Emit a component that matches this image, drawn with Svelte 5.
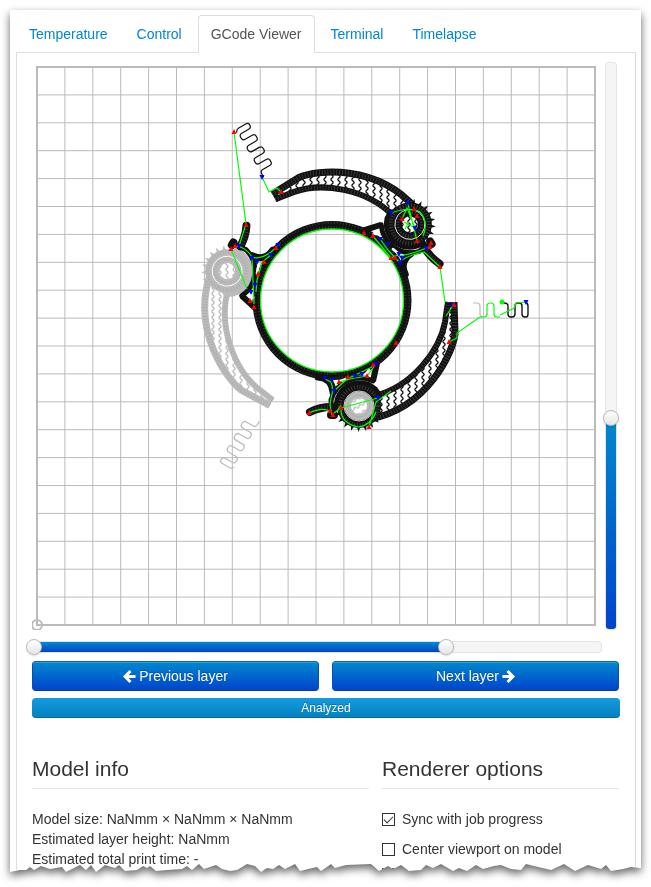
<script>
  const tabs = ['Temperature', 'Control', 'GCode Viewer', 'Terminal', 'Timelapse'];
  let active = $state('GCode Viewer');

  let layer = $state(372);
  let first = $state(0);
  let last = $state(725);

  let sync = $state(true);
  let center = $state(false);
  let zoomIn = $state(false);

  // torn bottom edge: horizontal position and depth above the lowest point
  const tear = [
    [0, 0], [10, 2], [16, 2], [20, 5], [24, 2], [31, 6], [40, 3], [52, 5], [56, 0], [70, 7], [76, 2], [81, 7],
    [86, 0], [95, 7], [105, 4], [109, 7], [115, 1], [127, 2], [133, 6], [137, 4], [140, 6], [146, 1], [157, 2],
    [172, 3], [177, 6], [182, 2], [189, 8], [194, 3], [206, 7], [212, 3], [220, 1], [227, 2], [237, 8],
    [245, 6], [251, 0], [257, 4], [263, 3], [269, 7], [275, 3], [285, 8], [290, 1], [298, 3], [307, 5],
    [311, 1], [321, 8], [325, 4], [336, 7], [361, 8], [369, 1], [378, 6], [383, 3], [391, 7], [399, 1],
    [411, 2], [416, 7], [423, 4], [431, 8], [443, 1], [449, 4], [457, 1], [466, 7], [473, 3], [484, 6],
    [491, 7], [501, 3], [511, 2], [516, 8], [524, 6], [541, 2], [554, 8], [565, 1], [578, 7], [591, 3],
    [596, 7], [601, 1], [613, 3], [621, 5], [631, 4]
  ];
  const clip =
    'polygon(0 0, ' +
    tear.map(([x, d]) => `${((x / 631) * 100).toFixed(2)}% calc(100% - ${d}px)`).join(', ') +
    ', 100% 0)';

  const cells = Array.from({ length: 19 }, (_, i) => 37 + (i + 1) * 27.9);

  const outerWall = 'M454,302 L455,334 C453,352 428,408 370,419';
  const innerWall = 'M448,302 L445,322 C440,350 412,387 374,396';
  const inside = 'M448,302 L445,322 C440,350 412,387 374,396 L370,419 C428,408 453,352 455,334 L454,302 Z';
  const purge =
    'M473,303 H477 Q480,303 480,306 V314 Q480,317 483,317 H484 Q487,317 487,314 V306 Q487,303 490,303 H491 Q494,303 494,306 V314 Q494,317 497,317 H498 Q501,317 501,314 V306 Q501,303 504,303 H505 Q508,303 508,306 V314 Q508,317 511,317 H512 Q515,317 515,314 V306 Q515,303 518,303 H519 Q522,303 522,306 V314 Q522,317 525,317 H526 Q528,317 528,314 V306 Q528,303 525,302';

  const teeth = Array.from({ length: 8 }, (_, i) => {
    const at = (r, deg) => {
      const a = (deg * Math.PI) / 180;
      return `${(359 + r * Math.cos(a)).toFixed(1)},${(406 + r * Math.sin(a)).toFixed(1)}`;
    };
    const d = 40 + i * 17;
    return `M${at(20, d - 6)} L${at(26, d)} L${at(20, d + 6)} Z`;
  }).join(' ');

  const arms = [
    { turn: 0, id: 'a', ink: '#111', mark: '#444' },
    { turn: -120, id: 'b', ink: '#111', mark: '#444' },
    { turn: 120, id: 'c', ink: '#bbb', mark: '#aaa' }
  ];

  const travel =
    'M234,132 L246,224 L239,246 M262,177 L269,192 L277,188 L281,192 M231,249 L247,289 M440,267 L445,302 M454,304 L446,316 M449,342 L457,338 L457,333 L480,317 M500,315 L514,308 L516,303 L526,302 M378,398 L341,408 L334,413 M369,427 L376,402 L391,391 M408,204 L417,241 M391,213 Q410,206 420,212 Q429,222 423,236 M402,219 L407,208 L415,228 L404,222 M405,229 L409,222 M373,236 L391,258 L400,254 M380,239 L388,250 L399,262 M399,256 Q414,254 431,246 M402,260 Q412,254 424,252 L440,267 M332,415 L330,405 L331,398 Q334,390 331,382 L325,379 M339,382 Q352,378 367,376 L376,364 M334,391 L347,379 L372,367 M309,413 Q322,407 330,411 M235,246 Q245,246 252,257 Q260,260 271,252 L280,244 M252,258 L254,304 M271,255 L262,262 L257,280 L256,292 M341,408 Q340,423 358,427 Q370,426 376,412 M341,405 L337,411';

  const reds = [
    [234, 132], [281, 192], [246, 225], [235, 246], [231, 249], [276, 248], [264, 262], [258, 274], [250, 301],
    [254, 307], [364, 233], [373, 236], [402, 219], [414, 209], [417, 216], [417, 241], [431, 243], [430, 247],
    [391, 258], [395, 258], [440, 267], [454, 305], [449, 342], [396, 343], [373, 365], [367, 376], [348, 377],
    [339, 382], [309, 413], [330, 411], [333, 415], [341, 408], [369, 427]
  ];
  const blues = [
    [262, 177], [278, 245], [239, 246], [252, 258], [257, 262], [271, 255], [255, 285], [251, 292], [408, 203],
    [391, 213], [415, 228], [380, 239], [388, 244], [399, 254], [402, 258], [400, 263], [426, 248], [452, 305],
    [526, 302], [325, 378], [332, 380], [334, 391], [355, 376], [362, 374], [376, 364], [378, 398]
  ];
</script>

<div class="shadow">
  <main class="paper" style:clip-path={clip}>
    <nav class="tabs">
      {#each tabs as tab}
        <a href="#{tab.toLowerCase().replace(' ', '-')}" class:active={tab === active} onclick={() => (active = tab)}>{tab}</a>
      {/each}
    </nav>

    <section class="panel">
      <div class="viewer">
        <svg class="bed" viewBox="32 62 568 568" role="img" aria-label="Layer preview">
          <defs>
            {#each arms as arm}
              <pattern id="fill-{arm.id}" width="7" height="6" patternUnits="userSpaceOnUse" patternTransform="rotate({-arm.turn} 332 300.5)">
                <rect width="7" height="6" fill="#fff" />
                <path d="M2,-1 L2,0 L4,2 L4,3 L2,5 L2,7" fill="none" stroke={arm.ink} stroke-width="1.3" />
              </pattern>
            {/each}
          </defs>

          <g stroke="#bbb" stroke-width="1">
            {#each cells as c}
              <path d="M{c},67 V625 M37,{c + 30} H595" />
            {/each}
          </g>
          <rect x="37" y="67" width="558" height="558" fill="none" stroke="#bbb" stroke-width="2" />
          <path d="M37,625 m-5,0 a5,5 0 1 0 10,0 a5,5 0 1 0 -10,0 M37,619 V625 H43" fill="none" stroke="#bbb" stroke-width="2" />

          {#each arms as arm}
            <g transform="rotate({arm.turn} 332 300.5)" fill="none">
              <path d={inside} fill="url(#fill-{arm.id})" />
              <g stroke={arm.ink}>
                <path d={outerWall} stroke-width="7" />
                <path d={innerWall} stroke-width="6" />
                <path d="M445,304 H457" stroke-width="4" />
              </g>
              <g stroke={arm.mark} stroke-dasharray="0.7 2.2">
                <path d={outerWall} stroke-width="5" />
                <path d={innerWall} stroke-width="4" />
              </g>
              <circle cx="359" cy="406" r="22" fill={arm.ink} />
              <path d="M334,411 A25,25 0 0 1 382,396 L374,412 Z" fill={arm.ink} />
              <path d={teeth} fill={arm.ink} />
              <g stroke={arm.mark} stroke-dasharray="0.8 2">
                <circle cx="359" cy="406" r="19" stroke-width="4" />
                <circle cx="359" cy="406" r="12" stroke-width="3" />
              </g>
              <circle cx="359" cy="406" r="15" stroke="#fff" stroke-width="0.8" />
              {#if arm.id === 'a'}
                <circle cx="359" cy="406" r="14.5" fill="#bbb" />
                <circle cx="359" cy="406" r="11" stroke="#a6a6a6" stroke-width="0.7" />
              {/if}
              <circle cx="359" cy="406" r="8" fill={arm.id === 'a' ? 'url(#fill-c)' : `url(#fill-${arm.id})`} />
              <path d="M333,408 A26.5,26.5 0 0 1 377,386" stroke="#fff" stroke-width="1.8" />
              {#if arm.id !== 'a'}
                <path d={purge} stroke={arm.ink} stroke-width="1.2" />
              {/if}
            </g>
          {/each}

          <g fill="none">
            <path d="M473,303 H477 Q480,303 480,306 V314 Q480,317 483,317" stroke="#bbb" stroke-width="1.2" />
            <path d="M501,303 H504 Q508,303 508,306 V314 Q508,317 511,317 H512 Q515,317 515,314 V306 Q515,303 518,303 H519 Q522,303 522,306 V314 Q522,317 525,317 H526 Q528,317 528,314 V306 Q528,303 525,302" stroke="#111" stroke-width="1.4" />
            <path d="M480,317 H484 Q487,317 487,314 V306 Q487,303 490,303 H491 Q494,303 494,306 V314 Q494,317 497,317 H500" stroke="#0f0" stroke-width="1.2" />

            <circle cx="332" cy="300.5" r="75.5" stroke="#111" stroke-width="8" />
            <circle cx="332" cy="300.5" r="75.5" stroke="#444" stroke-width="6" stroke-dasharray="0.7 2.3" />
            <circle cx="332" cy="300.5" r="75.5" stroke="#111" stroke-width="2" />
            <circle cx="332" cy="300.5" r="71.5" stroke="#0f0" stroke-width="1.3" />

            {#each arms as arm}
              <g transform="rotate({arm.turn} 332 300.5)" stroke="#111" stroke-linecap="round">
                <path d="M373,381 A30,30 0 0 0 331,400 L332,415" stroke-width="5" />
                <path d="M331,415 L334,415" stroke-width="8" />
                <path d="M318,377 Q332,378 333,392" stroke-width="7" />
                <path d="M377,363 L373,381" stroke-width="6" stroke-linecap="butt" />
                <path d="M331,407 Q320,407 310,412" stroke-width="8" />
                <path d="M331,407 Q320,407 310,412" stroke="#444" stroke-width="5" stroke-dasharray="0.6 2.4" stroke-linecap="butt" />
                <path d="M341,381 L346,379 M366,374 L369,370" stroke="#fff" stroke-width="2.6" />
              </g>
            {/each}

            <path d={travel} stroke="#0f0" stroke-width="1.2" />
          </g>
          <circle cx="502" cy="302" r="2.5" fill="#0f0" />
          {#each blues as [x, y]}
            <path d="M{x - 2.5},{y - 2} h5 l-2.5,5 z" fill="#00f" />
          {/each}
          {#each reds as [x, y]}
            <path d="M{x - 2.5},{y + 2} h5 l-2.5,-5 z" fill="#f00" />
          {/each}
        </svg>

        <div class="slider vertical">
          <div class="fill" style:height="{layer / 10}%"></div>
          <input type="range" min="0" max="1000" bind:value={layer} aria-label="Layer" />
        </div>
      </div>

      <div class="slider horizontal">
        <div class="fill" style:left="{first / 10}%" style:width="{(last - first) / 10}%"></div>
        <input type="range" min="0" max="1000" bind:value={first} aria-label="First command" />
        <input type="range" min="0" max="1000" bind:value={last} aria-label="Last command" />
      </div>

      <div class="buttons">
        <button type="button">
          <svg width="13" height="13" viewBox="0 0 13 13" aria-hidden="true"><path d="M7.5,1 L2,6.5 L7.5,12 M3,6.5 H12.5" /></svg>
          Previous layer
        </button>
        <button type="button">
          Next layer
          <svg width="13" height="13" viewBox="0 0 13 13" aria-hidden="true"><path d="M5.5,1 L11,6.5 L5.5,12 M0.5,6.5 H10" /></svg>
        </button>
      </div>

      <div class="progress">Analyzed</div>

      <div class="columns">
        <section>
          <h2>Model info</h2>
          <p>Model size: NaNmm × NaNmm × NaNmm</p>
          <p>Estimated layer height: NaNmm</p>
          <p>Estimated total print time: -</p>
        </section>
        <section>
          <h2>Renderer options</h2>
          <label><input type="checkbox" bind:checked={sync} />Sync with job progress</label>
          <label><input type="checkbox" bind:checked={center} />Center viewport on model</label>
          <div class="cut"><input type="checkbox" bind:checked={zoomIn} aria-label="Zoom in on model" /></div>
        </section>
      </div>
    </section>
  </main>
</div>

<style>
  :global(body) {
    background: #fff;
  }

  .shadow {
    padding: 10px 10px 15px;
    filter: drop-shadow(0 4px 4px rgba(0, 0, 0, 0.6));
    font: 14px/20px 'Liberation Sans', Arial, sans-serif;
    color: #333;
  }

  .paper {
    background: #fff;
    padding: 5px 5px 0 6px;
    overflow: hidden;
  }

  .tabs {
    display: flex;
    gap: 3px;
    border-bottom: 1px solid #ddd;
  }

  .tabs a {
    padding: 8px 12px;
    margin-bottom: -1px;
    border: 1px solid transparent;
    border-radius: 4px 4px 0 0;
    color: #08c;
    text-decoration: none;
  }

  .tabs a.active {
    color: #555;
    background: #fff;
    border-color: #ddd #ddd #fff;
  }

  .panel {
    border: solid #ddd;
    border-width: 0 1px;
    padding: 9px 15px 3px;
  }

  .viewer {
    display: flex;
    gap: 5px;
    padding-right: 3px;
  }

  .bed {
    flex: 1;
    min-width: 0;
    display: block;
  }

  .slider {
    position: relative;
    box-sizing: border-box;
    background: #f5f5f5;
    border: 1px solid #e3e3e3;
    border-radius: 4px;
  }

  .vertical {
    width: 12px;
  }

  .horizontal {
    height: 12px;
    margin: 11px 18px 0 2px;
  }

  .fill {
    position: absolute;
    border-radius: 3px;
    background: linear-gradient(#08c, #04c);
  }

  .vertical .fill {
    left: 0;
    right: 0;
    bottom: 0;
  }

  .horizontal .fill {
    top: 0;
    bottom: 0;
  }

  .slider input {
    position: absolute;
    appearance: none;
    background: none;
    margin: 0;
    pointer-events: none;
  }

  .vertical input {
    writing-mode: vertical-lr;
    direction: rtl;
    left: -3px;
    top: -8px;
    width: 16px;
    height: calc(100% + 16px);
  }

  .horizontal input {
    left: -9px;
    top: -3px;
    width: calc(100% + 18px);
    height: 16px;
  }

  .slider input::-webkit-slider-thumb {
    appearance: none;
    box-sizing: border-box;
    width: 16px;
    height: 16px;
    border: 1px solid #bbb;
    border-radius: 50%;
    background: linear-gradient(#fff, #e6e6e6);
    box-shadow: 0 1px 2px rgba(0, 0, 0, 0.15);
    pointer-events: auto;
  }

  .buttons {
    display: flex;
    gap: 13px;
    margin: 8px 1px 0 0;
  }

  button {
    flex: 1;
    display: flex;
    align-items: center;
    justify-content: center;
    gap: 3px;
    padding: 4px 12px;
    font: inherit;
    color: #fff;
    text-shadow: 0 -1px 0 rgba(0, 0, 0, 0.25);
    background: linear-gradient(#08c, #04c);
    border: 1px solid;
    border-color: #0067b0 #0050b5 #003fa8;
    border-radius: 4px;
    box-shadow: inset 0 1px 0 rgba(255, 255, 255, 0.2);
  }

  button path {
    fill: none;
    stroke: #fff;
    stroke-width: 3;
  }

  .progress {
    margin-top: 7px;
    font-size: 12px;
    text-align: center;
    color: #fff;
    text-shadow: 0 -1px 0 rgba(0, 0, 0, 0.25);
    background: linear-gradient(#149bdf, #0480be);
    border-radius: 4px;
    box-shadow: inset 0 -1px 0 rgba(0, 0, 0, 0.15);
  }

  .columns {
    display: grid;
    grid-template-columns: 337fr 237fr;
    gap: 13px;
    margin: 30px 1px 0 0;
  }

  h2 {
    margin: 0 0 20px;
    padding-top: 2px;
    font-size: 21px;
    font-weight: normal;
    line-height: 38px;
    border-bottom: 1px solid #e5e5e5;
  }

  p {
    margin: 0;
  }

  label {
    display: flex;
    align-items: center;
    gap: 7px;
    margin-bottom: 10px;
  }

  input[type='checkbox'] {
    appearance: none;
    box-sizing: border-box;
    flex: none;
    width: 13px;
    height: 13px;
    margin: 0;
    border: 1px solid #333;
    background: #fff;
    display: grid;
    place-items: center;
  }

  input[type='checkbox']:checked::before {
    content: '';
    box-sizing: border-box;
    width: 9px;
    height: 5px;
    margin-bottom: 2px;
    border: solid #333;
    border-width: 0 0 1px 1px;
    transform: rotate(-45deg);
  }

  .cut {
    height: 13px;
    margin: -1px 0 -13px;
  }
</style>
